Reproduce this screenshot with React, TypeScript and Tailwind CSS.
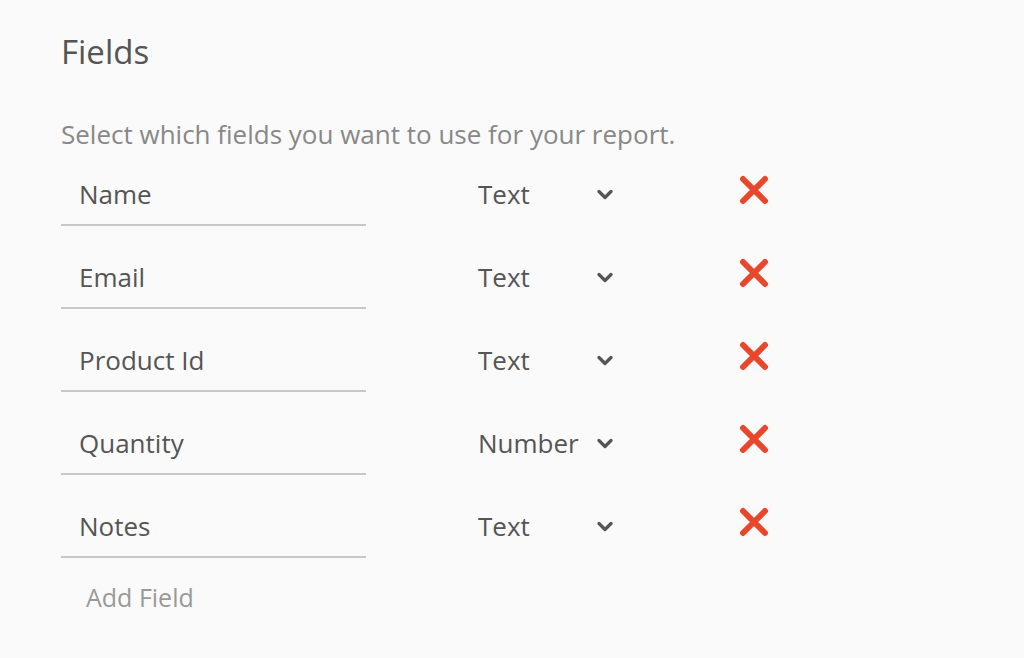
const fields = [
  { name: 'Name', type: 'Text' },
  { name: 'Email', type: 'Text' },
  { name: 'Product Id', type: 'Text' },
  { name: 'Quantity', type: 'Number' },
  { name: 'Notes', type: 'Text' },
]

function Chevron() {
  return (
    <svg width="16" height="11" viewBox="0 0 16 11" className="text-[#555]">
      <path d="M2 2.5 L8 8.5 L14 2.5" fill="none" stroke="currentColor" strokeWidth="3.2" strokeLinecap="round" strokeLinejoin="round" />
    </svg>
  )
}

function Cross() {
  return (
    <svg width="32" height="30" viewBox="0 0 32 30" className="text-[#e8472b]">
      <path d="M5 4 L27 26 M27 4 L5 26" fill="none" stroke="currentColor" strokeWidth="6" strokeLinecap="round" />
    </svg>
  )
}

function FieldRow({ name, type }: { name: string; type: string }) {
  return (
    <div className="flex h-[83px] items-start">
      <div className="w-[305px] border-b-2 border-[#c8c8c8] pl-[18px] pt-[15px] pb-[12px] text-[26px] leading-[36px] text-[#555]">
        {name}
      </div>
      <div className="ml-[112px] flex w-[135px] items-center justify-between pt-[15px] text-[26px] leading-[36px] text-[#555]">
        <span>{type}</span>
        <Chevron />
      </div>
      <div className="ml-[125px] pt-[14px]">
        <Cross />
      </div>
    </div>
  )
}

export default function App() {
  return (
    <div className="min-h-screen bg-[#fafafa] px-[61px] pt-[30px] font-['Open_Sans',sans-serif]">
      <h1 className="text-[33px] leading-[44px] text-[#555]">Fields</h1>
      <p className="mt-[42px] text-[26px] leading-[36px] text-[#888]">
        Select which fields you want to use for your report.
      </p>
      <div className="mt-[9px]">
        {fields.map((f) => (
          <FieldRow key={f.name} name={f.name} type={f.type} />
        ))}
      </div>
      <div className="mt-[3px] pl-[25px] text-[25px] leading-[36px] text-[#999]">Add Field</div>
    </div>
  )
}
